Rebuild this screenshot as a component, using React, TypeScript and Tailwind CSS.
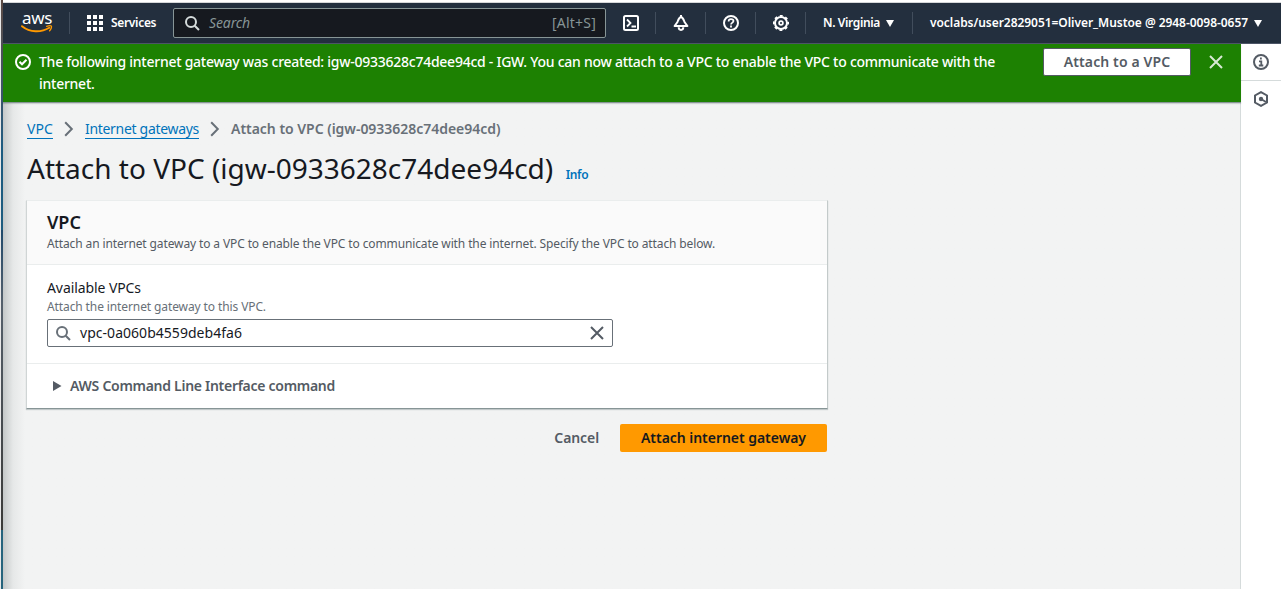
import type { ReactNode } from 'react';

function Logo() {
  return (
    <div className="flex w-[32px] flex-col items-center">
      <span className="h-[12px] text-[17px] leading-[10px] tracking-[-0.4px] text-white">aws</span>
      <svg width="32" height="9" viewBox="0 0 32 9" fill="none" stroke="#f90">
        <path d="M1 1.2 C9 7.6 20 7.8 28.3 2.8" strokeWidth="1.9" strokeLinecap="round" />
        <path d="M25.6 1.3 C28 .6 30 .7 30.4 1.2 C30.8 2 30.1 4.4 28.6 5.8" strokeWidth="1.3" strokeLinecap="round" />
      </svg>
    </div>
  );
}

function SearchIcon({ className }: { className: string }) {
  return (
    <svg width="16" height="16" viewBox="0 0 16 16" fill="none" stroke="currentColor" strokeWidth="2" className={className}>
      <circle cx="7" cy="7" r="5" />
      <path d="M10.7 10.7 15 15" />
    </svg>
  );
}

function CloseIcon({ className }: { className: string }) {
  return (
    <svg width="16" height="16" viewBox="0 0 16 16" fill="none" stroke="currentColor" strokeWidth="2" className={className}>
      <path d="m2 2 12 12M14 2 2 14" />
    </svg>
  );
}

function Caret() {
  return (
    <svg width="8" height="7" viewBox="0 0 8 7" fill="#fff">
      <path d="M0 0h8L4 7z" />
    </svg>
  );
}

function Chevron() {
  return (
    <svg width="10" height="16" viewBox="0 0 10 16" fill="none" stroke="#687078" strokeWidth="2">
      <path d="m1.2 1.2 6.6 6.8-6.6 6.8" />
    </svg>
  );
}

function NavIcon({ children }: { children: ReactNode }) {
  return (
    <div className="flex h-full w-[50px] items-center justify-center">
      <svg width="16" height="16" viewBox="0 0 16 16" fill="none" stroke="#fff" strokeWidth="2">
        {children}
      </svg>
    </div>
  );
}

function Divider() {
  return <div className="-ml-px h-[22px] w-px bg-[#414d5c]" />;
}

function Header() {
  return (
    <header className="flex h-[41px] shrink-0 items-center border-b border-[#4c5566] bg-[#232f3e] text-white">
      <div className="ml-[18px] w-[49px]">
        <Logo />
      </div>
      <Divider />
      <div className="ml-[17px] grid grid-cols-3 gap-[2px]">
        {[0, 1, 2, 3, 4, 5, 6, 7, 8].map((i) => (
          <i key={i} className="size-[4px] bg-white" />
        ))}
      </div>
      <span className="ml-[8px] w-[62px] text-[12px] font-semibold tracking-[-0.32px]">Services</span>
      <div className="flex h-[30px] w-[433px] items-center rounded-[2px] border border-[#879596] bg-[#16191f] pr-[9px] pl-[10px]">
        <SearchIcon className="text-[#d5dbdb]" />
        <span className="ml-[9px] flex-1 pb-px text-[14px] tracking-[-0.12px] text-[#879596] italic">Search</span>
        <span className="pb-px text-[14px] tracking-[0.21px] text-[#879596]">[Alt+S]</span>
      </div>
      <NavIcon>
        <rect x="1" y="1" width="14" height="14" rx="1.5" />
        <path d="m4 4.5 3.5 3.5L4 11.500M8.500 11.500H13" strokeWidth="1.8" />
      </NavIcon>
      <Divider />
      <NavIcon>
        <path d="M8 2C5.800 2.600 5.300 5 4.500 7L1.600 11h12.800l-2.900-4C10.700 5 10.200 2.600 8 2z" strokeLinejoin="round" />
        <path d="M8 0v2" />
        <path d="M5.700 12.300a2.300 2.600 0 0 0 4.600 0" />
      </NavIcon>
      <Divider />
      <NavIcon>
        <circle cx="8" cy="8" r="7" />
        <path d="M5.600 6.400C5.600 4.900 6.600 4.200 8 4.200s2.500.7 2.500 1.900C10.500 7.700 8 7.600 8 9.600" strokeWidth="1.700" />
        <path d="M7.100 11.600h1.800" />
      </NavIcon>
      <Divider />
      <NavIcon>
        <circle cx="8" cy="8" r="6" />
        <circle cx="8" cy="8" r="7.200" strokeWidth="1.800" strokeDasharray="2.828 2.828" strokeDashoffset="1.414" />
        <circle cx="8" cy="8" r="1.900" strokeWidth="1.700" />
      </NavIcon>
      <Divider />
      <span className="ml-[17px] w-[63px] text-[12px] font-semibold tracking-[-0.36px]">N. Virginia</span>
      <Caret />
      <div className="ml-[19px]">
        <Divider />
      </div>
      <span className="ml-[17px] w-[324px] whitespace-nowrap text-[12px] font-semibold tracking-[-0.05px]">
        voclabs/user2829051=Oliver_Mustoe @ 2948-0098-0657
      </span>
      <Caret />
    </header>
  );
}

function Banner() {
  return (
    <div className="flex h-[59px] shrink-0 items-start border-b border-[#879596] bg-[#1d8102] text-white shadow-[0_1px_1px_0_rgba(0,28,36,0.15)]">
      <svg width="16" height="16" viewBox="0 0 16 16" fill="none" stroke="#fff" strokeWidth="2" className="mt-[10px] ml-[12px] shrink-0">
        <circle cx="8" cy="8" r="7" />
        <path d="m4.500 7.800 2.500 2.500 4.500-4.600" />
      </svg>
      <p className="mt-[7px] ml-[8px] w-[1004px] shrink-0 text-[14px] leading-[22px] font-medium tracking-[-0.256px]">
        The following internet gateway was created: igw-0933628c74dee94cd - IGW. You can now attach to a VPC to enable the VPC to communicate with the
        <br />
        internet.
      </p>
      <button className="mt-[4px] flex h-[28px] w-[148px] shrink-0 items-center justify-center rounded-[2px] border border-[#545b64] bg-white pb-[2px] text-[14px] font-semibold tracking-[0.12px] text-[#545b64]">
        Attach to a VPC
      </button>
      <CloseIcon className="mt-[10px] ml-[17px] shrink-0 text-[#d8ead4]" />
    </div>
  );
}

function ToolsRail() {
  return (
    <aside className="flex w-[41px] shrink-0 flex-col border-l border-[#d5dbdb] bg-white">
      <div className="flex h-[37px] items-center justify-center border-b border-[#d5dbdb]">
        <svg width="16" height="16" viewBox="0 0 16 16" fill="none" stroke="#545b64" strokeWidth="2">
          <circle cx="8" cy="8" r="7" />
          <path d="M7.900 3.500v2M6 7.300h2.300v4M5.800 11.500h4.500" strokeWidth="1.800" />
        </svg>
      </div>
      <div className="flex h-[36px] items-center justify-center">
        <svg width="16" height="16" viewBox="0 0 16 16" fill="none" stroke="#545b64" strokeWidth="2">
          <path d="m8 1.100 6 3.400v7L8 14.900l-6-3.400v-7z" />
          <circle cx="8" cy="8" r="2.200" fill="#545b64" stroke="none" />
          <path d="m8 8 5 3" />
        </svg>
      </div>
    </aside>
  );
}

function VpcCard() {
  return (
    <section className="mt-[14px] w-[802px] border border-t-[#eaeded] border-r-[#c3caca] border-b-[#879596] border-l-[#d0d5d5] bg-white shadow-[0_1px_1px_0_rgba(0,28,36,0.2)]">
      <div className="h-[64px] border-b border-[#eaeded] bg-[#fafafa] px-[20px] pt-[10px]">
        <h2 className="text-[18px] leading-[22px] font-semibold text-[#16191f]">VPC</h2>
        <p className="mt-[3px] text-[12px] leading-[16px] tracking-[-0.119px] text-[#545b64]">
          Attach an internet gateway to a VPC to enable the VPC to communicate with the internet. Specify the VPC to attach below.
        </p>
      </div>
      <div className="h-[99px] border-b border-[#eaeded] px-[20px] pt-[12px]">
        <div className="text-[14px] leading-[22px] tracking-[-0.084px] text-[#16191f]">Available VPCs</div>
        <div className="text-[12px] leading-[16px] tracking-[-0.107px] text-[#687078]">Attach the internet gateway to this VPC.</div>
        <div className="mt-[4px] flex h-[28px] w-[566px] items-center rounded-[2px] border border-[#687078] pr-[7px] pl-[7px]">
          <SearchIcon className="text-[#687078]" />
          <span className="ml-[9px] flex-1 text-[14px] leading-[22px] tracking-[0.034px] text-[#16191f]">vpc-0a060b4559deb4fa6</span>
          <CloseIcon className="text-[#545b64]" />
        </div>
      </div>
      <div className="flex h-[44px] items-center pl-[26px]">
        <svg width="9" height="10" viewBox="0 0 9 10" fill="#545b64">
          <path d="M0 0v10l8.500-5z" />
        </svg>
        <span className="ml-[8px] pb-[2px] text-[14px] font-semibold tracking-[-0.283px] text-[#545b64]">AWS Command Line Interface command</span>
      </div>
    </section>
  );
}

export default function App() {
  return (
    <div className="flex h-[589px] w-[1281px] overflow-hidden bg-white font-['Noto_Sans','Liberation_Sans',sans-serif]">
      <div className="w-[3px] shrink-0 border-l border-[#e8e8e8] bg-linear-to-b from-[#5b4a44] via-[#1c5b80] via-25% to-[#26647c]">
        <div className="mt-[230px] h-[300px] bg-linear-to-b from-[#1f4a6b] via-[#55606b] via-25% to-[#3a3a38]" />
      </div>
      <div className="flex min-w-0 flex-1 flex-col">
        <div className="h-[3px] shrink-0 border-b border-[#d5d7d9] bg-white" />
        <Header />
        <div className="flex min-h-0 flex-1">
          <div className="z-10 flex min-w-0 flex-1 flex-col">
            <div className="z-10 -mr-px flex flex-col">
              <Banner />
            </div>
            <main className="flex-1 bg-linear-to-r from-[#c4c8c8] via-[#e6e8e8] via-[10px] to-[#f2f3f3] to-[22px] pl-[23px]">
              <nav className="mt-[15px] flex h-[22px] items-center pl-px text-[14px] leading-[18px]">
                <a className="w-[26px] border-b border-[#0073bb] tracking-[0.05px] text-[#0073bb]">VPC</a>
                <span className="mr-[11px] ml-[11px]"><Chevron /></span>
                <a className="w-[114px] border-b border-[#0073bb] tracking-[-0.306px] whitespace-nowrap text-[#0073bb]">Internet gateways</a>
                <span className="mr-[11px] ml-[11px]"><Chevron /></span>
                <span className="font-semibold tracking-[-0.027px] text-[#687078]">Attach to VPC (igw-0933628c74dee94cd)</span>
              </nav>
              <div className="mt-[10px] flex h-[36px] items-baseline pl-px">
                <h1 className="text-[28px] leading-[36px] text-[#16191f]">Attach to VPC (igw-0933628c74dee94cd)</h1>
                <a className="ml-[12.5px] text-[12px] font-semibold tracking-[-0.36px] text-[#0073bb]">Info</a>
              </div>
              <VpcCard />
              <div className="mt-[15px] flex w-[801px] items-center justify-end text-[14px] font-semibold">
                <button className="mr-[21px] pb-[2px] tracking-[-0.1px] text-[#545b64]">Cancel</button>
                <button className="h-[28px] w-[207px] rounded-[2px] bg-[#ff9900] pb-[2px] tracking-[-0.038px] text-[#16191f]">Attach internet gateway</button>
              </div>
            </main>
          </div>
          <ToolsRail />
        </div>
      </div>
    </div>
  );
}
